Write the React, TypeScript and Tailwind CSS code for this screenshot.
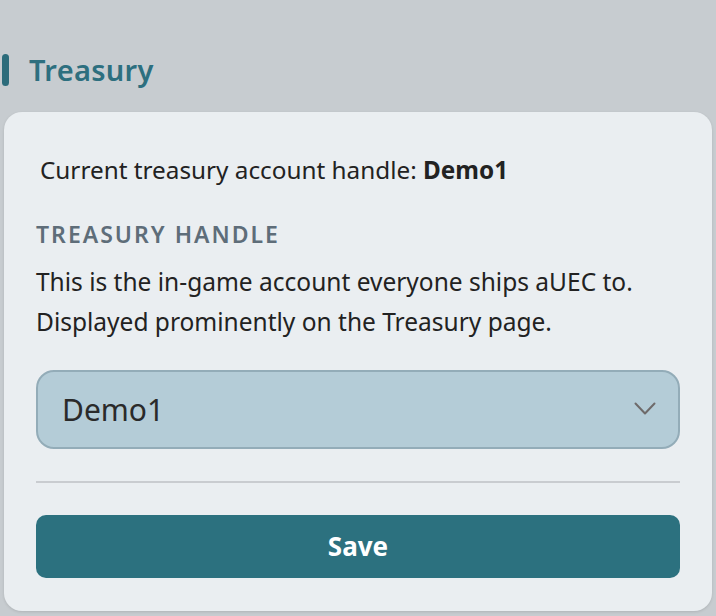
export default function App() {
  return (
    <div
      className="min-h-[616px] w-full bg-[#c7ccd0] pt-[52px] pl-[4px] pr-[4px] pb-[4px]"
      style={{ fontFamily: '"Noto Sans", "Open Sans", sans-serif' }}
    >
      {/* section heading */}
      <div className="flex items-center gap-[20px] h-[36px]">
        <div className="w-[7px] h-[32px] rounded-full bg-[#2c6c7b] -ml-[2px]"></div>
        <h2 className="text-[29px] font-semibold text-[#2d6f7f] tracking-[0.3px]">Treasury</h2>
      </div>

      <div className="mt-[24px] rounded-[18px] bg-[#eaeef1] px-[32px] pt-[40px] pb-[33px] shadow-[0_1px_3px_rgba(0,0,0,0.12)]">
        <p className="pl-[4px] text-[24.3px] leading-[36px] text-[#222]">
          Current treasury account handle: <span className="font-bold">Demo1</span>
        </p>

        <div className="mt-[30px] text-[23px] font-semibold tracking-[2px] text-[#5e6d79] leading-[32px]">
          TREASURY HANDLE
        </div>
        <p className="mt-[12px] text-[24.5px] leading-[40px] text-[#222]">
          This is the in-game account everyone ships aUEC to.
          <br />
          Displayed prominently on the Treasury page.
        </p>

        <div className="mt-[28px] flex h-[79px] items-center justify-between rounded-[18px] border-2 border-[#93acb8] bg-[#b4ccd7] pl-[24px] pr-[22px]">
          <span className="text-[30px] text-[#2a2a2a]">Demo1</span>
          <svg width="22" height="14" viewBox="0 0 22 14" fill="none" className="mb-[2px]">
            <path d="M1.5 1.5 L11 11.5 L20.5 1.5" stroke="#6e6a6a" strokeWidth="2" strokeLinecap="round" strokeLinejoin="round" />
          </svg>
        </div>

        <div className="mt-[32px] h-[2px] bg-[#c9ccd0]"></div>

        <button className="mt-[32px] flex h-[63px] w-full items-center justify-center rounded-[10px] bg-[#2c717f] text-[26px] font-bold text-white">
          Save
        </button>
      </div>
    </div>
  );
}
